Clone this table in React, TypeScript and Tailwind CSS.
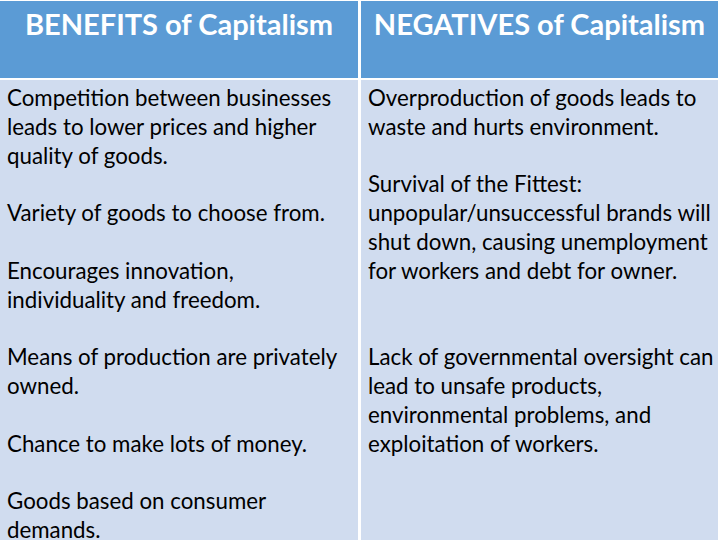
const benefits: string[] = [
  'Competition between businesses',
  'leads to lower prices and higher',
  'quality of goods.',
  '',
  'Variety of goods to choose from.',
  '',
  'Encourages innovation,',
  'individuality and freedom.',
  '',
  'Means of production are privately',
  'owned.',
  '',
  'Chance to make lots of money.',
  '',
  'Goods based on consumer',
  'demands.',
];

const negatives: string[] = [
  'Overproduction of goods leads to',
  'waste and hurts environment.',
  '',
  'Survival of the Fittest:',
  'unpopular/unsuccessful brands will',
  'shut down, causing unemployment',
  'for workers and debt for owner.',
  '',
  '',
  'Lack of governmental oversight can',
  'lead to unsafe products,',
  'environmental problems, and',
  'exploitation of workers.',
];

const Lines = ({ lines }: { lines: string[] }) => (
  <div className="pt-[4px] px-[7px]">
    {lines.map((line, i) => (
      <div key={i} className="h-[28.8px] leading-[28.8px] whitespace-nowrap">
        {line || '\u00a0'}
      </div>
    ))}
  </div>
);

export default function App() {
  return (
    <div
      className="w-[720px] h-[540px] overflow-hidden bg-white pt-[1px] text-black"
      style={{ fontFamily: 'Lato, "Open Sans", sans-serif' }}
    >
      <div className="grid grid-cols-[358px_357px] gap-x-[3px] gap-y-[2px] h-full">
        <div className="bg-[#5b9bd5] h-[77px] text-white font-bold text-[29px] leading-[43px] text-center pt-[1px]">
          BENEFITS of Capitalism
        </div>
        <div className="bg-[#5b9bd5] h-[77px] text-white font-bold text-[29px] leading-[43px] text-center pt-[1px]">
          NEGATIVES of Capitalism
        </div>
        <div className="bg-[#d0dcef] text-[22.3px]">
          <Lines lines={benefits} />
        </div>
        <div className="bg-[#d0dcef] text-[22.3px]">
          <Lines lines={negatives} />
        </div>
      </div>
    </div>
  );
}
